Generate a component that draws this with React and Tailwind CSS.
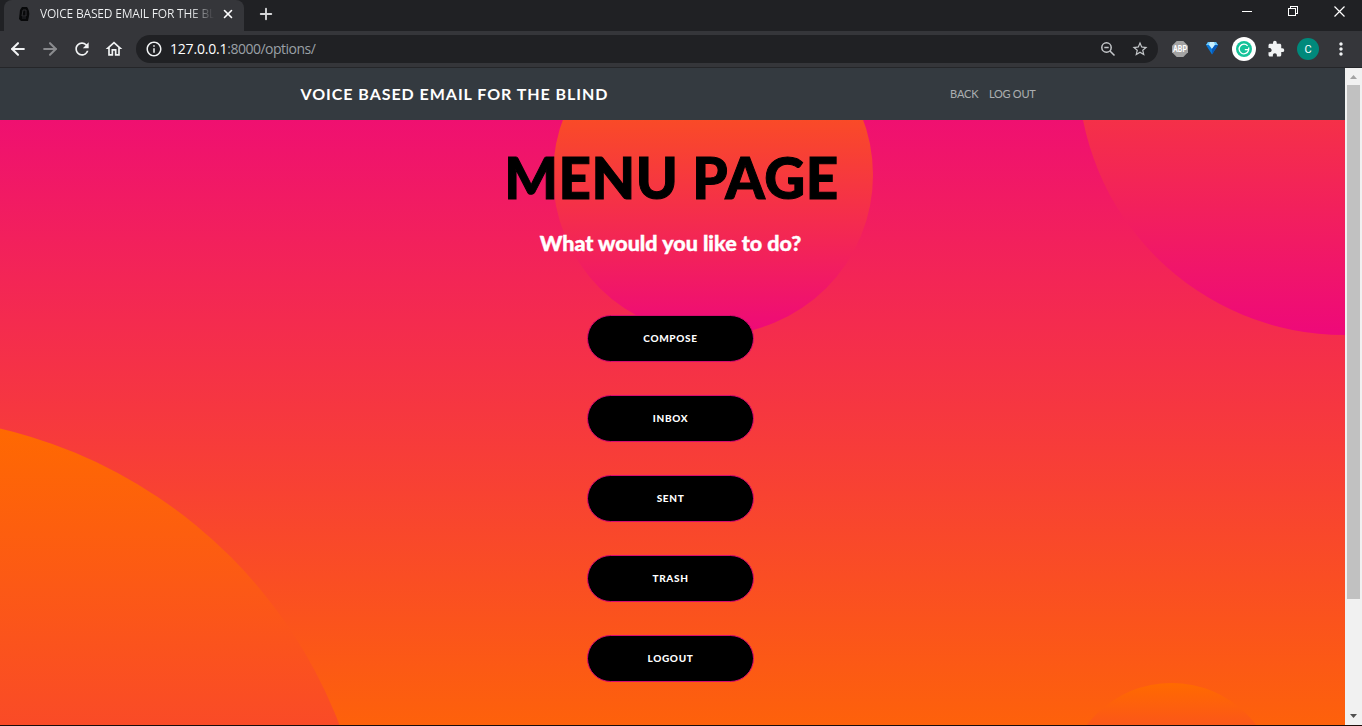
import { ArrowLeft, ArrowRight, Plus, X } from "lucide-react";
import { MdRefresh, MdOutlineHome, MdInfoOutline, MdStarBorder, MdExtension, MdMoreVert } from "react-icons/md";

const options = ["COMPOSE", "INBOX", "SENT", "TRASH", "LOGOUT"];

function TabStrip() {
  return (
    <div className="flex h-[31px] shrink-0 items-stretch bg-[#202124] pl-1">
      <div className="flex w-[240px] items-center rounded-tr-lg rounded-tl-lg bg-[#35363a] pl-3">
        <svg className="mb-1 h-4 w-4" viewBox="0 0 16 16">
          <path d="M6 1h5q3 4 2 9l-1 5H5l-2-2 1-9z" fill="#08090a" />
          <path d="M7 4h3v6H6z" fill="none" stroke="#303134" />
          <path d="M6 12h4" stroke="#25272a" />
        </svg>
        <div className="mb-[3px] ml-2 w-[174px] whitespace-nowrap bg-[linear-gradient(90deg,#f1f3f4_86%,#35363a_100%)] bg-clip-text font-['Open_Sans',sans-serif] text-[12px] leading-4 font-medium tracking-[-0.2px] text-transparent">
          VOICE BASED EMAIL FOR THE BL
        </div>
        <X className="mb-[3px] ml-[7px] h-[14px] w-[14px] text-white" strokeWidth={2.8} />
      </div>
      <Plus className="mt-[5px] ml-[13px] h-[18px] w-[18px] text-[#d5d6d8]" strokeWidth={2.5} />
      <div className="ml-auto flex items-start pt-[6px] pr-[17px] text-white">
        <svg className="h-[11px] w-[11px]" viewBox="0 0 11 11" shapeRendering="crispEdges">
          <path d="M0 5.5h10" stroke="currentColor" />
        </svg>
        <svg className="ml-[35px] h-[11px] w-[11px]" viewBox="0 0 11 11" fill="none" stroke="currentColor" shapeRendering="crispEdges">
          <path d="M.5 2.5h7v7h-7zM2.5 2.5v-2h7v7h-2" />
        </svg>
        <svg className="ml-[35px] h-[11px] w-[11px]" viewBox="0 0 11 11" stroke="currentColor" strokeWidth="1.2">
          <path d="M.5.5l10 10M10.5.5l-10 10" />
        </svg>
      </div>
    </div>
  );
}

function Toolbar() {
  return (
    <div className="flex h-[37px] shrink-0 items-center border-b border-[#252629] bg-[#35363a] pl-[8px] text-[#f1f3f4]">
      <ArrowLeft className="h-5 w-5" strokeWidth={2.5} />
      <ArrowRight className="ml-3 h-5 w-5 text-[#8a8b8e]" strokeWidth={2.5} />
      <MdRefresh className="ml-3 h-5 w-5" />
      <MdOutlineHome className="ml-3 h-5 w-5" />
      <div className="ml-[12px] flex h-7 w-[1022px] items-center rounded-full bg-[#202124] pr-[9px] pl-[9px]">
        <MdInfoOutline className="h-[18px] w-[18px]" />
        <div className="ml-[7px] font-['Open_Sans',sans-serif] text-[14px] leading-5 tracking-[-0.36px] text-white">
          <span className="font-medium tracking-[-0.2px]">127.0.0.1</span>
          <span className="tracking-[-0.5px] text-[#9aa0a6]">:8000/options/</span>
        </div>
        <svg className="ml-auto h-4 w-4 text-[#c4c7ca]" viewBox="0 0 16 16" fill="none" stroke="currentColor" strokeWidth="1.5">
          <circle cx="6.5" cy="6.5" r="4.7" />
          <path d="M4.300 6.500h4.400M10 10l4.500 4.500" />
        </svg>
        <MdStarBorder className="ml-[15px] h-[18px] w-[18px] text-[#c4c7ca]" />
      </div>
      <svg className="ml-[14px] h-4 w-4" viewBox="0 0 16 16">
        <path d="M4.700 0h6.600L16 4.700v6.600L11.300 16H4.700L0 11.300V4.700z" fill="#a3a3a3" />
        <text x="8" y="11" fill="#fff" textAnchor="middle" textLength="14" lengthAdjust="spacingAndGlyphs" className="font-['Roboto',sans-serif] text-[8.5px] font-bold">ABP</text>
      </svg>
      <svg className="mb-[2px] ml-[18px] h-[14px] w-[12px]" viewBox="0 0 12 14">
        <path d="M2 1h8l2 3-6 9.500L0 4z" fill="#0a78d8" />
        <path d="M2 1h8l2 3H0z" fill="#6cc7f8" />
        <path d="M4 1h4l1 3-3 4-3-4z" fill="#c9f0ff" />
        <path d="M6 8v5.500L12 4 9 4z" fill="#0758b8" />
      </svg>
      <svg className="ml-[14px] h-6 w-6" viewBox="0 0 24 24" fill="none">
        <circle cx="12" cy="12" r="12" fill="#fff" />
        <circle cx="12" cy="12" r="8" fill="#15c39a" />
        <path d="M15.600 8.900A4.800 4.800 0 1 0 16.500 13.500V12.700H12.800M16.700 10.500v2.300" stroke="#fff" strokeWidth="1.300" />
      </svg>
      <MdExtension className="ml-[11px] h-[18px] w-[18px]" />
      <div className="ml-[12px] flex h-[22px] w-[22px] items-center justify-center rounded-full bg-[#00897b] font-['Roboto',sans-serif] text-[11px] leading-none text-white">C</div>
      <MdMoreVert className="ml-[12px] h-5 w-5" />
    </div>
  );
}

function Masthead() {
  return (
    <main className="relative h-[722px] shrink-0 overflow-hidden bg-[linear-gradient(0deg,#ff6a00,#ee0979)]">
      <div className="absolute -bottom-[586px] -left-[589px] h-[960px] w-[960px] rounded-full bg-[linear-gradient(0deg,#ee0979,#ff6a00)]" />
      <div className="absolute -top-[266px] -right-[266px] h-[533px] w-[533px] rounded-full bg-[linear-gradient(0deg,#ee0979,#ff6a00)]" />
      <div className="absolute right-[5%] -bottom-[106px] h-[213px] w-[213px] rounded-full bg-[linear-gradient(0deg,#ee0979,#ff6a00)]" />
      <div className="absolute -top-[53px] right-[472px] h-[320px] w-[320px] rounded-full bg-[linear-gradient(0deg,#ee0979,#ff6a00)]" />

      <div className="relative flex flex-col">
        <nav className="flex h-[52px] items-center bg-[#343a40] pl-[300.5px] font-['Lato',sans-serif]">
          <span className="w-[649.5px] text-[16px] font-bold tracking-[0.96px] text-white">VOICE BASED EMAIL FOR THE BLIND</span>
          <span className="text-[11px] tracking-[-0.1px] text-white/60">BACK</span>
          <span className="ml-[10.5px] text-[11px] tracking-[-0.27px] text-white/60">LOG OUT</span>
        </nav>
        <div className="flex flex-col items-center pr-[4px]">
          <h1 className="mt-[19px] pl-[2px] font-['Lato',sans-serif] text-[56.5px] leading-[76px] font-black tracking-[0.5px] text-black [-webkit-text-stroke:1px_black]">MENU PAGE</h1>
          <h2 className="mt-[12px] font-['Lato',sans-serif] text-[21.5px] leading-8 font-black text-white [-webkit-text-stroke:0.4px_white]">What would you like to do?</h2>
          <div className="mt-[56px] flex flex-col gap-[33px]">
            {options.map((label) => (
              <button key={label} className="h-[47px] w-[167px] rounded-full border border-[#d80970] bg-black pb-[1px] font-['Lato',sans-serif] text-[10px] font-black tracking-[0.67px] text-white">
                {label}
              </button>
            ))}
          </div>
        </div>
      </div>
    </main>
  );
}

function Scrollbar() {
  return (
    <div className="flex w-[17px] shrink-0 flex-col items-center bg-[#f1f1f1]">
      <svg className="h-[17px] w-[17px] shrink-0" viewBox="0 0 17 17"><path d="M5 11l3.500-4 3.500 4z" fill="#a3a3a3" /></svg>
      <div className="h-[514px] w-[13px] bg-[#c1c1c1]" />
      <svg className="mt-auto h-[17px] w-[17px] shrink-0" viewBox="0 0 17 17"><path d="M5 6l3.500 4L12 6z" fill="#505050" /></svg>
    </div>
  );
}

export default function App() {
  return (
    <div className="flex h-[726px] w-[1362px] flex-col overflow-hidden">
      <TabStrip />
      <Toolbar />
      <div className="flex h-[657px] shrink-0 overflow-hidden">
        <div className="flex w-[1345px] shrink-0 flex-col overflow-hidden">
          <Masthead />
        </div>
        <Scrollbar />
      </div>
      <div className="h-px bg-[#1c0d0a]" />
    </div>
  );
}
